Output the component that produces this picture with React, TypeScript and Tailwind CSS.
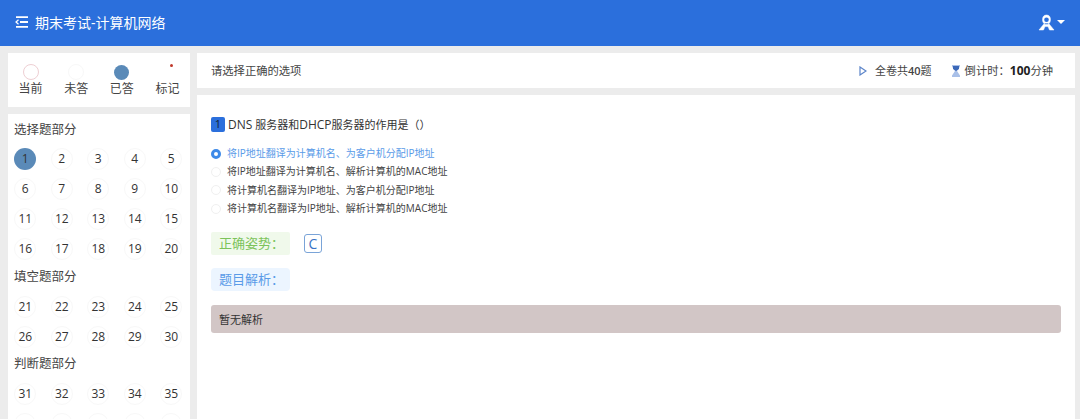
import React from "react";

const FONT = "font-['Open_Sans','Noto_Sans_CJK_SC',sans-serif]";

const sections = [
  { title: "选择题部分", start: 1, end: 20, grid: "mt-[9.5px] mb-[9.5px]" },
  { title: "填空题部分", start: 21, end: 30, grid: "mt-[10.5px] mb-[8.5px]" },
  { title: "判断题部分", start: 31, end: 40, grid: "mt-[10.5px] mb-[8.5px]" },
];

const options = [
  "将IP地址翻译为计算机名、为客户机分配IP地址",
  "将IP地址翻译为计算机名、解析计算机的MAC地址",
  "将计算机名翻译为IP地址、为客户机分配IP地址",
  "将计算机名翻译为IP地址、解析计算机的MAC地址",
];

function range(start: number, end: number) {
  const out: number[] = [];
  for (let i = start; i <= end; i++) out.push(i);
  return out;
}

function MenuIcon() {
  return (
    <svg width="14" height="12" viewBox="0 0 14 12" fill="none" stroke="white" strokeWidth="1.8">
      <path d="M1 1.2h12M5 6h8M1 10.8h12" />
      <path d="M3.5 3.8 1 6l2.5 2.2" strokeWidth="1.2" />
    </svg>
  );
}

function UserIcon() {
  return (
    <svg width="17" height="17" viewBox="0 0 17 17" fill="none" stroke="white">
      <path d="M8.5 1C5.8 1 4.5 3 4.5 5.5c0 2.2 1 3.6 1.6 4.2L1 16h4.5l1.5-3.4h3l1.5 3.4H16l-5.1-6.3c.6-.6 1.6-2 1.6-4.2C12.5 3 11.2 1 8.5 1z" fill="white" strokeWidth="0.5" />
      <circle cx="8.5" cy="5.8" r="2.3" fill="#2b6fdc" stroke="none" />
      <path d="M6.6 9.8h3.8" stroke="#2b6fdc" strokeWidth="0.9" />
    </svg>
  );
}

function Legend({ label, children }: { label: string; children: React.ReactNode }) {
  return (
    <div className="flex w-[45px] flex-col items-center">
      <div className="relative flex h-[16px] w-[16px] items-center justify-center">{children}</div>
      <span className="mt-[1px] text-[12px] leading-[16px] text-[#444]">{label}</span>
    </div>
  );
}

function Sidebar() {
  return (
    <aside className="flex w-[182px] shrink-0 flex-col gap-[7px]">
      <div className="flex h-[54px] items-start justify-between bg-white pt-[11px]">
        <Legend label="当前">
          <div className="h-[16px] w-[16px] rounded-full border border-[#eecfd3]" />
        </Legend>
        <Legend label="未答">
          <div className="h-[16px] w-[16px] rounded-full border border-[#f8f8f8]" />
        </Legend>
        <Legend label="已答">
          <div className="h-[15px] w-[15px] rounded-full bg-[#5a8ab8]" />
        </Legend>
        <Legend label="标记">
          <div className="absolute right-[2px] top-[0px] h-[3px] w-[3px] rounded-full bg-[#c0392b]" />
        </Legend>
      </div>
      <div className="h-[320px] overflow-hidden bg-white px-[6px] pt-[8px]">
        {sections.map((s) => (
          <div key={s.title}>
            <div className="h-[16px] text-[12.5px] leading-[16px] text-[#444]">{s.title}</div>
            <div className={`-ml-[7px] grid w-[183px] grid-cols-[repeat(5,36.5px)] gap-y-[8px] ${s.grid}`}>
              {range(s.start, s.end).map((n) => (
                <div key={n} className="flex justify-center">
                  <div
                    className={`flex h-[22px] w-[22px] items-center justify-center rounded-full text-[12px] text-[#333] ${
                      n === 1 ? "bg-[#5a8ab8]" : "border border-[#f8f8f8]"
                    }`}
                  >
                    {n}
                  </div>
                </div>
              ))}
            </div>
          </div>
        ))}
      </div>
    </aside>
  );
}

export default function App() {
  return (
    <div className={`h-[419px] w-[1080px] overflow-hidden bg-[#ececec] ${FONT}`}>
      <header className="flex h-[46px] items-center justify-between bg-[#2b6fdc] pb-[2px] pl-[15px] pr-[15px]">
        <div className="flex items-center gap-[6px] text-[14px] text-white">
          <MenuIcon />
          <span>期末考试-计算机网络</span>
        </div>
        <div className="flex items-center gap-[2px]">
          <UserIcon />
          <div className="h-0 w-0 border-x-[4.5px] border-t-[4px] border-x-transparent border-t-white" />
        </div>
      </header>
      <div className="flex gap-[7px] pl-[8px] pr-[5px] pt-[7px]">
        <Sidebar />
        <main className="flex min-w-0 flex-1 flex-col gap-[7px]">
          <div className="flex h-[35px] items-center justify-between bg-white pl-[14px] pr-[22px] pt-[1px] text-[11.3px] text-[#444]">
            <span>请选择正确的选项</span>
            <div className="flex items-center">
              <svg width="8" height="10" viewBox="0 0 8 10" fill="none" stroke="#5b84c9" strokeWidth="1.2">
                <path d="M1 1v8l6-4z" />
              </svg>
              <span className="ml-[8px] text-[11px]">
                全卷共<span className="font-semibold">40</span>题
              </span>
              <svg className="ml-[20px]" width="8" height="12" viewBox="0 0 8 12">
                <path d="M0 0h8v1.5L5 6l3 4.5V12H0v-1.5L3 6 0 1.5z" fill="#a9c0e8" />
                <path d="M1 1h6v3L4 6 1 4z" fill="#3b68b8" />
              </svg>
              <span className="ml-[5px]">
                倒计时：<span className="text-[12px] font-bold text-[#222]">100</span>分钟
              </span>
            </div>
          </div>
          <div className="h-[330px] bg-white px-[14px] pt-[22px]">
            <div className="flex h-[15px] items-center text-[11px] text-[#333]">
              <span className="mr-[3px] flex h-[15px] w-[14px] items-center justify-center rounded-[2px] bg-[#2b6fdc] text-[11px] text-[#123]">
                1
              </span>
              <span>
                <span className="text-[12px]">DNS</span> 服务器和<span className="text-[12px]">DHCP</span>服务器的作用是（）
              </span>
            </div>
            <div className="mt-[12.5px] flex flex-col">
              {options.map((o, i) => (
                <div key={o} className={`flex h-[18.3px] items-center text-[10px] ${i === 0 ? "text-[#5a9be8]" : "text-[#444]"}`}>
                  <span
                    className={`mr-[6px] h-[10px] w-[10px] rounded-full ${
                      i === 0 ? "border-[3px] border-[#3e8ae8] bg-white" : "border border-[#f0f0f0]"
                    }`}
                  />
                  {o}
                </div>
              ))}
            </div>
            <div className="mt-[14.5px] flex items-center">
              <div className="flex h-[23px] w-[79px] items-center rounded-[2px] bg-[#f0f9eb] pl-[8px] text-[13px] text-[#7cc35a]">
                正确姿势：
              </div>
              <div className="ml-[14px] flex h-[19px] w-[18px] items-center justify-center rounded-[3px] border border-[#7aa4d8] text-[14px] text-[#3a74c4]">
                C
              </div>
            </div>
            <div className="mt-[13px] flex h-[23px] w-[79px] items-center rounded-[4px] bg-[#ecf5ff] pl-[8px] text-[13px] text-[#5a9be8]">
              题目解析：
            </div>
            <div className="mt-[14px] flex h-[28px] w-[850px] items-center rounded-[3px] bg-[#d2c6c6] pl-[8px] pt-[2px] text-[11px] text-[#333]">
              暂无解析
            </div>
          </div>
        </main>
      </div>
    </div>
  );
}
